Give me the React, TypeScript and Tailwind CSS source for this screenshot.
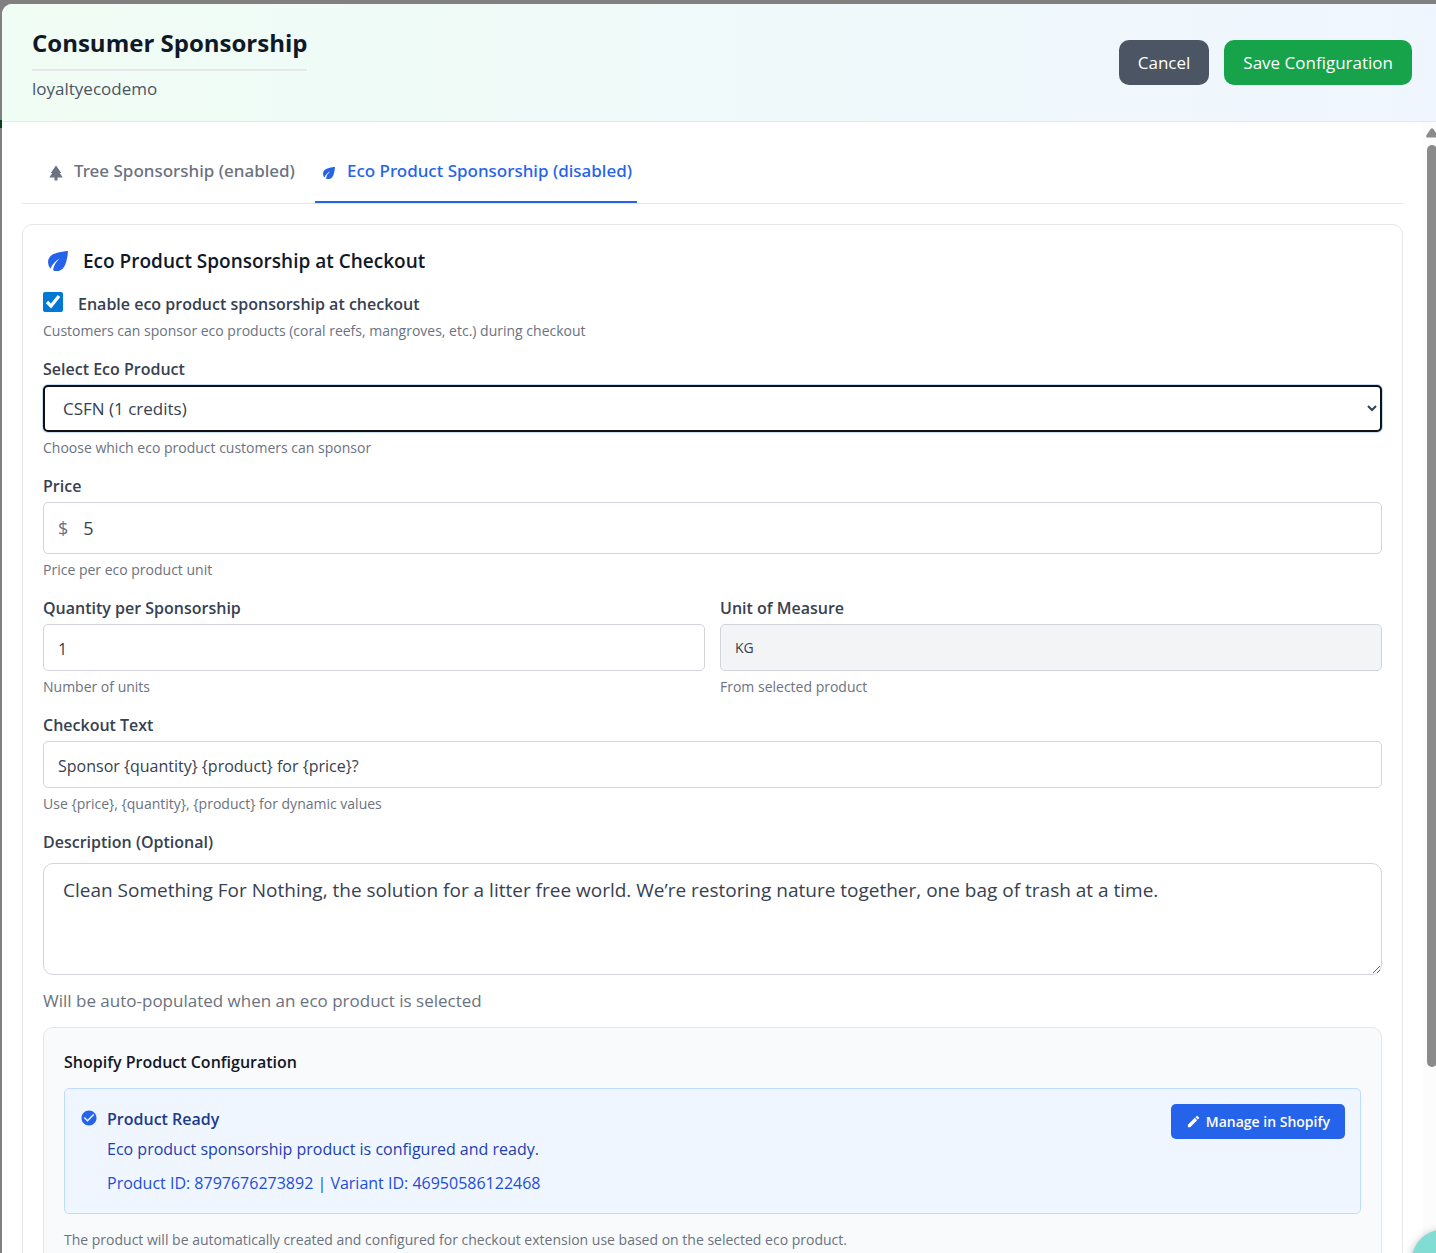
import { useState, type ReactNode } from "react";
import { MdCheckCircle, MdEco, MdEdit, MdPark } from "react-icons/md";

const inputClass =
  "block w-full h-[47px] rounded-[5px] border border-[#d1d5db] bg-white px-[14px] pt-[2px] text-[16px] text-[#374151] outline-none";

function Label({ htmlFor, children }: { htmlFor: string; children: ReactNode }) {
  return (
    <label htmlFor={htmlFor} className="block mb-[3px] text-[16px] leading-[26px] font-semibold text-[#374151]">
      {children}
    </label>
  );
}

function Help({ children }: { children: ReactNode }) {
  return <p className="mt-[5px] text-[14px] leading-[22px] text-[#6b7280]">{children}</p>;
}

function Header() {
  return (
    <header className="flex shrink-0 items-center justify-between border-b border-[#e5e7eb] bg-linear-to-r from-[#f0fdf4] to-[#eff6ff] py-[19px] pl-[30px] pr-6">
      <div>
        <h1 className="border-b-2 border-[#e5e7eb] pb-[6px] text-[24px] leading-10 font-bold text-[#111827]">
          Consumer Sponsorship
        </h1>
        <p className="mt-[5px] text-[17px] leading-[26px] text-[#4b5563]">loyaltyecodemo</p>
      </div>
      <div className="flex gap-[15px]">
        <button type="button" className="h-[45px] rounded-[10px] bg-[#4b5563] px-[19px] text-[17px] text-white">
          Cancel
        </button>
        <button type="button" className="h-[45px] rounded-[10px] bg-[#16a34a] px-[19px] text-[17px] text-white">
          Save Configuration
        </button>
      </div>
    </header>
  );
}

function Tabs() {
  const [active, setActive] = useState("eco");
  const tabs = [
    { id: "tree", label: "Tree Sponsorship (enabled)", Icon: MdPark },
    { id: "eco", label: "Eco Product Sponsorship (disabled)", Icon: MdEco },
  ];

  return (
    <nav className="flex gap-[15px] border-b border-[#e5e7eb] pl-5">
      {tabs.map(({ id, label, Icon }) => (
        <button
          key={id}
          type="button"
          onClick={() => setActive(id)}
          className={`flex items-center gap-[9px] border-b-2 px-[5px] pt-4 pb-[17px] font-['Noto_Sans',sans-serif] text-[17px] leading-[26px] font-medium ${
            active === id ? "border-[#2563eb] text-[#2563eb]" : "border-transparent text-[#6b7280]"
          }`}>
          <Icon size={18} className="mt-1" />
          {label}
        </button>
      ))}
    </nav>
  );
}

function ShopifyPanel() {
  return (
    <section className="mt-3 rounded-[10px] border border-[#e5e7eb] bg-[#f9fafb] p-5">
      <h3 className="text-[16px] leading-[28px] font-semibold text-[#111827]">Shopify Product Configuration</h3>
      <div className="mt-3 flex items-start justify-between rounded-[5px] border border-[#bfdbfe] bg-[#eff6ff] p-[15px]">
        <div className="flex items-start gap-[9px]">
          <MdCheckCircle size={18} className="mt-[5px] shrink-0 text-[#2563eb]" />
          <div className="text-[16px]">
            <p className="leading-[30px] font-semibold text-[#1e3a8a]">Product Ready</p>
            <p className="leading-[30px] text-[#1e40af]">Eco product sponsorship product is configured and ready.</p>
            <p className="mt-[5px] leading-[29px] text-[#1d4ed8]">
              Product ID: 8797676273892 | Variant ID: 46950586122468
            </p>
          </div>
        </div>
        <button
          type="button"
          className="flex h-[35px] shrink-0 items-center gap-[5px] rounded-[5px] bg-[#2563eb] px-[15px] text-[14px] font-semibold text-white">
          <MdEdit size={15} />
          Manage in Shopify
        </button>
      </div>
      <p className="mt-[15px] text-[14px] leading-[22px] text-[#6b7280]">
        The product will be automatically created and configured for checkout extension use based on the selected eco
        product.
      </p>
    </section>
  );
}

function EcoProductForm() {
  const [enabled, setEnabled] = useState(true);
  const [product, setProduct] = useState("csfn");
  const [price, setPrice] = useState("5");
  const [quantity, setQuantity] = useState("1");
  const [checkoutText, setCheckoutText] = useState("Sponsor {quantity} {product} for {price}?");
  const [description, setDescription] = useState(
    "Clean Something For Nothing, the solution for a litter free world. We’re restoring nature together, one bag of trash at a time."
  );

  return (
    <section className="mt-5 rounded-[10px] border border-[#e5e7eb] bg-white p-5">
      <h2 className="flex items-center gap-[10px] text-[19px] leading-8 font-semibold text-[#111827]">
        <MdEco size={30} className="text-[#2563eb]" />
        Eco Product Sponsorship at Checkout
      </h2>

      <div className="mt-[14px] mb-[14px]">
        <label className="flex items-start gap-[15px] text-[16px] leading-[26px] font-semibold text-[#374151]">
          <input
            type="checkbox"
            checked={enabled}
            onChange={(e) => setEnabled(e.target.checked)}
            className="mt-px size-5 accent-[#0078d4]"
          />
          Enable eco product sponsorship at checkout
        </label>
        <p className="mt-[3px] text-[14px] leading-[22px] text-[#6b7280]">
          Customers can sponsor eco products (coral reefs, mangroves, etc.) during checkout
        </p>
      </div>

      <div className="flex flex-col gap-[14px]">
        <div>
          <Label htmlFor="product">Select Eco Product</Label>
          <select
            id="product"
            value={product}
            onChange={(e) => setProduct(e.target.value)}
            className="block h-[47px] w-full rounded-[5px] border-2 border-[#101010] bg-white px-[14px] text-[17px] text-[#374151] ring-1 ring-[#c9dcf5] outline-none">
            <option value="csfn">CSFN (1 credits)</option>
          </select>
          <Help>Choose which eco product customers can sponsor</Help>
        </div>

        <div>
          <Label htmlFor="price">Price</Label>
          <div className="flex h-[52px] items-center rounded-[5px] border border-[#d1d5db] bg-white pl-[14px] text-[18px]">
            <span className="text-[#6b7280]">$</span>
            <input
              id="price"
              type="text"
              value={price}
              onChange={(e) => setPrice(e.target.value)}
              className="h-full min-w-0 flex-1 px-[15px] text-[#374151] outline-none"
            />
          </div>
          <Help>Price per eco product unit</Help>
        </div>

        <div className="grid grid-cols-2 gap-[15px]">
          <div>
            <Label htmlFor="quantity">Quantity per Sponsorship</Label>
            <input
              id="quantity"
              type="text"
              value={quantity}
              onChange={(e) => setQuantity(e.target.value)}
              className={inputClass}
            />
            <Help>Number of units</Help>
          </div>
          <div>
            <Label htmlFor="unit">Unit of Measure</Label>
            <input
              id="unit"
              type="text"
              readOnly
              value="KG"
              className="block h-[47px] w-full rounded-[5px] border border-[#d1d5db] bg-[#f3f4f6] px-[14px] text-[14px] text-[#374151] outline-none"
            />
            <Help>From selected product</Help>
          </div>
        </div>

        <div>
          <Label htmlFor="checkout-text">Checkout Text</Label>
          <input
            id="checkout-text"
            type="text"
            value={checkoutText}
            onChange={(e) => setCheckoutText(e.target.value)}
            className={inputClass}
          />
          <Help>
            Use {"{price}"}, {"{quantity}"}, {"{product}"} for dynamic values
          </Help>
        </div>

        <div>
          <Label htmlFor="description">Description (Optional)</Label>
          <textarea
            id="description"
            value={description}
            onChange={(e) => setDescription(e.target.value)}
            className="mt-2 block h-28 w-full resize-y rounded-[10px] border border-[#d1d5db] bg-white px-[19px] py-3 text-[19px] leading-[28px] text-[#374151] outline-none"
          />
          <p className="mt-3 text-[17px] leading-[28px] text-[#6b7280]">
            Will be auto-populated when an eco product is selected
          </p>
        </div>
      </div>

      <ShopifyPanel />
    </section>
  );
}

function ScrollTrack() {
  return (
    <div className="w-[13px] shrink-0 overflow-hidden bg-[#fcfcfc] pt-[6px] pl-[3px]" aria-hidden="true">
      <svg width="12" height="10" viewBox="0 0 12 10" className="max-w-none">
        <path d="M6 0.3 Q6.8 0.3 7.4 1.1 L11.7 7.6 Q12.2 9.4 10.8 9.4 L1.2 9.4 Q-0.2 9.4 0.3 7.6 L4.6 1.1 Q5.2 0.3 6 0.3Z" fill="#8b8b8b" />
      </svg>
      <div className="mt-[7px] ml-px h-[922px] w-[10px] rounded-[5px] bg-[#8b8b8b]" />
    </div>
  );
}

export default function App() {
  return (
    <div className="relative flex h-screen overflow-hidden bg-[#808080] pt-1 font-['Open_Sans','Noto_Sans',sans-serif]">
      <div className="w-[2px] shrink-0 pt-[116px]">
        <div className="h-2 bg-[#05401f]" />
      </div>
      <div className="flex min-w-0 flex-1 flex-col overflow-hidden rounded-tl-[10px] bg-white">
        <Header />
        <div className="flex min-h-0 flex-1">
          <main className="min-w-0 flex-1 overflow-hidden p-5">
            <Tabs />
            <EcoProductForm />
          </main>
          <ScrollTrack />
        </div>
      </div>
      <div className="absolute -right-9 -bottom-[37px] size-[60px] rounded-full bg-[#81dcd3] shadow-[0_2px_10px_rgba(0,0,0,0.3)]" />
    </div>
  );
}
